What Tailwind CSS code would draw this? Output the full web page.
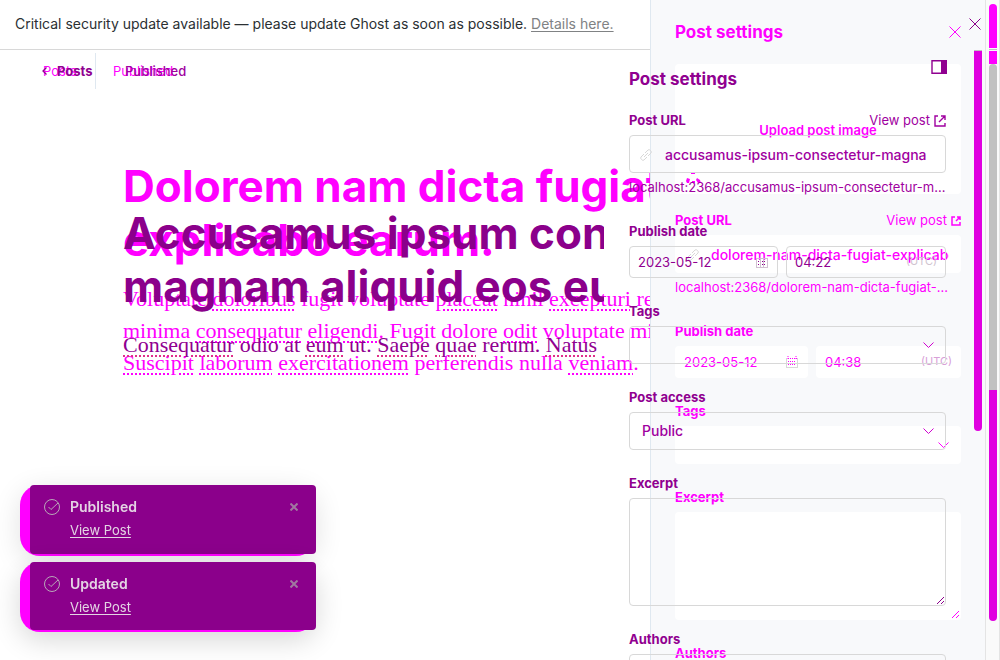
<!DOCTYPE html>
<html lang="en">
<head>
<meta charset="utf-8">
<meta name="viewport" content="width=device-width, initial-scale=1">
<title>Post editor comparison</title>
<script src="https://cdn.jsdelivr.net/npm/@tailwindcss/browser@4"></script>
</head>
<body class="grid h-screen overflow-hidden bg-white font-['Inter',sans-serif] text-sm text-[#2b3033]">

<!-- First revision, drawn in magenta -->
<div class="col-start-1 row-start-1 flex h-screen min-w-0 overflow-hidden">
  <main class="min-w-0 flex-1 overflow-hidden whitespace-nowrap">
    <p class="h-[50px] border-b border-[#d8d8d8] pl-[15px] text-[14px] leading-[48px] text-[#2b3033]">Critical security update available — please update Ghost as soon as possible. <a href="#" class="text-[#808284] underline underline-offset-2">Details here.</a></p>
    <nav class="flex h-10 pl-[43px] pt-[3px] text-[13px] leading-9 text-[#ff00ff]">
      <a href="#" class="h-9 w-[53px] border-r border-[#dfe8f0]">Posts</a>
      <span class="pl-[17px]">Published</span>
    </nav>
    <article class="pl-[123px] pt-[69px] text-[#ff00ff]">
      <h1 class="text-[44px] font-bold leading-[54px]">Dolorem nam dicta fugiat<br>explicabo earum.</h1>
      <p class="mt-4 font-['Liberation_Serif',serif] text-[22px] leading-8 [&>span]:underline [&>span]:decoration-dotted [&>span]:decoration-2 [&>span]:underline-offset-3">Voluptate <span>doloribus</span> fugit voluptate <span>placeat</span> nihil <span>excepturi</span> rerum<br>minima <span>consequatur</span> <span>eligendi</span>. Fugit dolore <span>odit</span> voluptate minus<br><span>Suscipit</span> <span>laborum</span> <span>exercitationem</span> perferendis nulla <span>veniam</span>.</p>
    </article>
  </main>
  <aside class="flex w-[335px] border-l border-[#dfe8f0] bg-[#f8f9fb] pl-6 text-[#ff00ff]">
    <form class="w-[286px]">
      <div class="flex h-16 items-center justify-between">
        <h2 class="text-[17px] font-bold">Post settings</h2>
        <button type="button" aria-label="Close"><svg class="size-3" viewBox="0 0 12 12" fill="none" stroke="currentColor"><path d="M.5.5l11 11M11.500.5l-11 11"/></svg></button>
      </div>
      <div class="flex h-[130px] flex-col items-center rounded-sm bg-white pt-[50px]">
        <button type="button" class="h-8 text-[13px] font-semibold">Upload post image</button>
        <svg class="mt-[26px] mr-auto ml-[11px] h-3 w-4 shrink-0" viewBox="0 0 16 12" fill="currentColor"><path d="M5 1h4v1H5zM1 6l3 1-1 4H1l-1-2zM6 9h3v2H6zM11 6l3 2 1 3h-3l-2-3z"/></svg>
      </div>
      <div class="mt-4 mb-[23px]">
        <div class="mb-1 flex h-[21px] items-center justify-between text-[13px]"><label for="url-a" class="font-bold">Post URL</label><a href="#" class="flex items-center gap-1">View post <svg class="size-2.5" viewBox="0 0 10 10" fill="none" stroke="currentColor" stroke-width="1.5"><path d="M4 1H1v8h8V6M6 1h3v3M9 1L5 5"/></svg></a></div>
        <div class="flex h-[38px] items-center rounded-sm bg-white pr-3 pl-3 pt-0.5">
          <svg class="mr-3 size-3 shrink-0 text-[#d8d8d8]" viewBox="0 0 12 12" fill="none" stroke="currentColor"><path d="M5 4l3-3q1-1 2.500.5t.5 2.500L8 7M7 8l-3 3q-1 1-2.500-.5T1 8l3-3M4 8l4-4"/></svg>
          <input id="url-a" class="min-w-0 flex-1 text-[14px] font-medium" value="dolorem-nam-dicta-fugiat-explicabo-earum">
        </div>
        <p class="mt-1 h-[21px] truncate pr-2 text-[13px] leading-[21px]">localhost:2368/dolorem-nam-dicta-fugiat-explicabo</p>
      </div>
      <div class="mb-[23px]">
        <label for="date-a" class="mb-1 block h-[21px] text-[13px] leading-[21px] font-bold">Publish date</label>
        <div class="flex gap-2 text-[13px]">
          <div class="flex h-8 w-[133px] items-center rounded-sm bg-white px-[9px]"><input id="date-a" class="min-w-0 flex-1" value="2023-05-12"><svg class="size-3.5" viewBox="0 0 14 14" fill="none" stroke="currentColor"><path d="M1 3.500h12M3 1v3M11 1v3M3 6.500h8M3 9.500h8" stroke-dasharray="1 1"/><path d="M1 12.500h12M1.500 3v10M12.500 3v10" stroke="#d8d8d8"/></svg></div>
          <div class="flex h-8 min-w-0 flex-1 items-center rounded-sm bg-white px-[9px]"><input aria-label="Publish time" class="w-0 min-w-0 flex-1" value="04:38"><span class="text-[11px] text-[#d8a0d8]">(UTC)</span></div>
        </div>
      </div>
      <div class="mb-[23px]">
        <label for="tags-a" class="mb-1 block h-[21px] text-[13px] leading-[21px] font-bold">Tags</label>
        <div class="grid items-center"><select id="tags-a" class="col-start-1 row-start-1 h-[38px] w-full appearance-none rounded-sm bg-white"><option></option></select><svg class="pointer-events-none col-start-1 row-start-1 mr-3 h-1.5 w-[11px] justify-self-end" viewBox="0 0 11 6" fill="none" stroke="currentColor"><path d="M.5.5l5 5 5-5"/></svg></div>
      </div>
      <div class="mb-[23px]">
        <label for="excerpt-a" class="mb-1 block h-[21px] text-[13px] leading-[21px] font-bold">Excerpt</label>
        <div class="grid items-end"><textarea id="excerpt-a" class="col-start-1 row-start-1 block h-[108px] w-full resize-none rounded-sm bg-white"></textarea><svg class="pointer-events-none col-start-1 row-start-1 mr-0.5 mb-0.5 size-[7px] justify-self-end" viewBox="0 0 7 7" stroke="#ff00ff"><path d="M0 7l7-7M4 7l3-3"/></svg></div>
      </div>
      <p class="text-[13px] leading-[21px] font-bold">Authors</p>
    </form>
    <div class="mt-[50px] ml-[13px] h-[381px] w-2 rounded-b-full border-t border-[#c1c1c1] bg-[#e000e0]"></div>
  </aside>
  <div class="flex w-[15px] flex-col items-center border-x border-[#e4e4e4] bg-[#fafafa] pt-1">
    <div class="h-11 w-2 rounded-t-full bg-[#ff00ff]"></div>
    <div class="my-px h-px w-2 bg-[#c1c1c1]"></div>
    <div class="h-[13px] w-2 bg-[#ff00ff]"></div>
    <div class="h-[326px] w-2 rounded-t-sm bg-[#c1c1c1]"></div>
    <div class="h-[231px] w-2 rounded-b-full bg-[#e000e0]"></div>
  </div>
</div>

<!-- Second revision, drawn in purple -->
<div class="col-start-1 row-start-1 flex h-screen min-w-0 overflow-hidden text-[#900090]">
  <main class="mr-[25px] min-w-0 flex-1 overflow-hidden whitespace-nowrap pt-[53px]">
    <nav class="flex h-9 items-center pl-[42px] text-[13px]">
      <a href="#" class="flex w-[83px] items-center gap-2.5 font-bold"><svg class="h-2 w-[5px]" viewBox="0 0 5 8" fill="none" stroke="currentColor" stroke-width="1.3"><path d="M4.500.5L1 4l3.500 3.500"/></svg>Posts</a>
      <span class="font-medium text-[#a000a0]">Published</span>
    </nav>
    <article class="pl-[123px] pt-[118px]">
      <h1 class="text-[44px] font-bold leading-[53px] text-[#8b008b]">Accusamus ipsum con<br>magnam aliquid eos eum</h1>
      <p class="mt-4 font-['Liberation_Serif',serif] text-[22px] leading-8 [&>span]:underline [&>span]:decoration-[#e0308a] [&>span]:decoration-dotted [&>span]:decoration-2 [&>span]:underline-offset-3"><span>Consequatur</span> odio at <span>eum</span> ut. <span>Saepe</span> <span>quae</span> rerum. <span>Natus</span></p>
    </article>
  </main>
  <aside class="w-[371px] pt-[18px]">
    <div class="flex justify-end pr-[19px]"><button type="button" aria-label="Close panel"><svg class="size-3" viewBox="0 0 12 12" fill="none" stroke="#8b008b"><path d="M.5.5l11 11M11.500.5l-11 11"/></svg></button></div>
    <form class="w-[317px] pt-6">
      <div class="mb-[19px] flex h-[37px] justify-between">
        <h2 class="self-end text-[17px] font-bold">Post settings</h2>
        <button type="button" aria-label="Toggle sidebar" class="mt-1.5 mr-[-1px] self-start"><svg class="h-3.5 w-4" viewBox="0 0 16 14"><path d="M1 .7h14v12.600H1z" fill="#fff" stroke="currentColor" stroke-width="1.400"/><path d="M10 0h6v14h-6z" fill="currentColor"/></svg></button>
      </div>
      <div class="mb-[23px]">
        <div class="mb-1 flex h-[21px] items-center justify-between text-[13px]"><label for="url-b" class="font-bold">Post URL</label><a href="#" class="flex items-center gap-1 text-[#a000a0]">View post <svg class="size-3" viewBox="0 0 12 12" fill="none" stroke="currentColor" stroke-width="1.400"><path d="M4 1H1v10h10V8M7 1h4v4M11 1L5 7"/></svg></a></div>
        <div class="flex h-[38px] items-center rounded-sm border border-[#d8d8d8] pr-3 pl-2.5 pt-0.5">
          <svg class="mr-[13px] size-3 shrink-0 text-[#d8d8d8]" viewBox="0 0 12 12" fill="none" stroke="currentColor"><path d="M5 4l3-3q1-1 2.500.5t.5 2.500L8 7M7 8l-3 3q-1 1-2.500-.5T1 8l3-3M4 8l4-4"/></svg>
          <input id="url-b" class="min-w-0 flex-1 text-[14px] font-medium text-[#a000a0]" value="accusamus-ipsum-consectetur-magna">
        </div>
        <p class="mt-1 h-[21px] truncate text-[13px] leading-[21px] text-[#a000a0]">localhost:2368/accusamus-ipsum-consectetur-magnam</p>
      </div>
      <div class="mb-[23px]">
        <label for="date-b" class="mb-1 block h-[21px] text-[13px] leading-[21px] font-bold">Publish date</label>
        <div class="flex gap-2 text-[13px]">
          <div class="flex h-8 w-[149px] items-center rounded-sm border border-[#d8d8d8] px-2"><input id="date-b" class="min-w-0 flex-1" value="2023-05-12"><svg class="size-3.5" viewBox="0 0 14 14" fill="none" stroke="currentColor"><path d="M3 6.500h8M3 9.500h8" stroke-dasharray="1 1"/><path d="M1 3.500h12M1 12.500h12M1.500 3v10M12.500 3v10M5.500 3v10M8.500 3v10" stroke="#d0c0d0"/></svg></div>
          <div class="flex h-8 min-w-0 flex-1 items-center rounded-sm border border-[#d8d8d8] px-2"><input aria-label="Publish time" class="w-0 min-w-0 flex-1" value="04:22"><span class="text-[11px] text-[#d0c4d0]">(UTC)</span></div>
        </div>
      </div>
      <div class="mb-[23px]">
        <label for="tags-b" class="mb-1 block h-[21px] text-[13px] leading-[21px] font-bold">Tags</label>
        <div class="grid items-center"><select id="tags-b" class="col-start-1 row-start-1 h-[38px] w-full appearance-none rounded-sm border border-[#d8d8d8]"><option></option></select><svg class="pointer-events-none col-start-1 row-start-1 mr-3 h-1.5 w-[11px] justify-self-end" viewBox="0 0 11 6" fill="none" stroke="#d000d0"><path d="M.5.5l5 5 5-5"/></svg></div>
      </div>
      <div class="mb-[23px]">
        <label for="access-b" class="mb-1 block h-[21px] text-[13px] leading-[21px] font-bold">Post access</label>
        <div class="grid items-center"><select id="access-b" class="col-start-1 row-start-1 h-[38px] w-full appearance-none rounded-sm border border-[#d8d8d8] px-3 text-[14px] font-medium text-[#a000a0]"><option>Public</option></select><svg class="pointer-events-none col-start-1 row-start-1 mr-3 h-1.5 w-[11px] justify-self-end" viewBox="0 0 11 6" fill="none" stroke="#d000d0"><path d="M.5.5l5 5 5-5"/></svg></div>
      </div>
      <div class="mb-[23px]">
        <label for="excerpt-b" class="mb-1 block h-[21px] text-[13px] leading-[21px] font-bold">Excerpt</label>
        <div class="grid items-end"><textarea id="excerpt-b" class="col-start-1 row-start-1 block h-[108px] w-full resize-none rounded-sm border border-[#d8d8d8]"></textarea><svg class="pointer-events-none col-start-1 row-start-1 mr-0.5 mb-0.5 size-[7px] justify-self-end" viewBox="0 0 7 7" stroke="#8b008b"><path d="M0 7l7-7M4 7l3-3"/></svg></div>
      </div>
      <label for="authors-b" class="mb-1 block h-[21px] text-[13px] leading-[21px] font-bold">Authors</label>
      <input id="authors-b" class="h-[38px] w-full rounded-sm border border-[#d8d8d8]">
    </form>
  </aside>
</div>

<!-- Notifications -->
<div class="fixed bottom-7 left-5 flex w-[296px] flex-col gap-1.5 text-[#e4d4e4]">
  <div class="rounded-[20px] bg-[#ff00ff] pb-0.5 pl-2.5 shadow-[0_6px_28px_rgba(0,0,0,0.12)]">
    <div class="flex h-[69px] rounded bg-[#8b008b] pt-3.5 pl-3.5 pr-[18px]">
      <svg class="size-4 shrink-0 text-[#b8a8b8]" viewBox="0 0 16 16" fill="none" stroke="currentColor"><circle cx="8" cy="8" r="7.500"/><path d="M4.500 8l2.500 2.500L14 4"/></svg>
      <div class="ml-2.5 flex-1"><p class="text-[14px] leading-4 font-semibold">Published</p><a href="#" class="mt-1.5 block w-fit text-[13px] leading-[18px] underline underline-offset-2">View Post</a></div>
      <button type="button" aria-label="Dismiss Published" class="mt-1 self-start"><svg class="size-2" viewBox="0 0 8 8" stroke="#a078a0" stroke-width="2"><path d="M.5.5l7 7M7.500.5l-7 7"/></svg></button>
    </div>
  </div>
  <div class="rounded-[20px] bg-[#ff00ff] pb-0.5 pl-2.5 shadow-[0_8px_28px_rgba(0,0,0,0.16)]">
    <div class="flex h-[68px] rounded bg-[#8b008b] pt-3.5 pl-3.5 pr-[18px]">
      <svg class="size-4 shrink-0 text-[#b8a8b8]" viewBox="0 0 16 16" fill="none" stroke="currentColor"><circle cx="8" cy="8" r="7.500"/><path d="M4.500 8l2.500 2.500L14 4"/></svg>
      <div class="ml-2.5 flex-1"><p class="text-[14px] leading-4 font-semibold">Updated</p><a href="#" class="mt-1.5 block w-fit text-[13px] leading-[18px] underline underline-offset-2">View Post</a></div>
      <button type="button" aria-label="Dismiss Updated" class="mt-1 self-start"><svg class="size-2" viewBox="0 0 8 8" stroke="#a078a0" stroke-width="2"><path d="M.5.5l7 7M7.500.5l-7 7"/></svg></button>
    </div>
  </div>
</div>
</body>
</html>
